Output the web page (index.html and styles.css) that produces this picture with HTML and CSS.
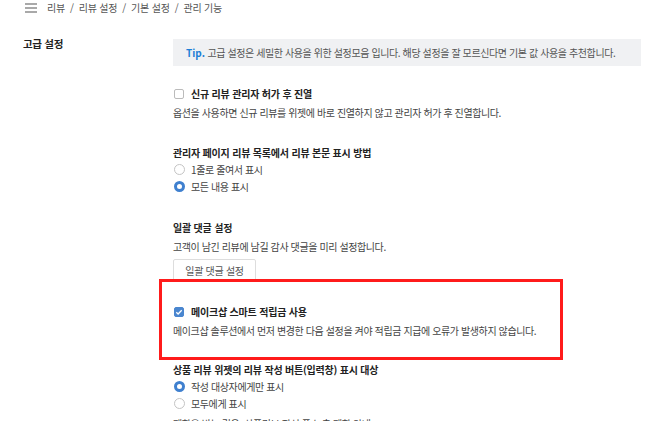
FILE: index.html
```html
<!DOCTYPE html>
<html lang="ko">
<head>
<meta charset="utf-8">
<link rel="stylesheet" href="styles.css">
</head>
<body>
<header class="topbar">
  <svg class="menu" width="12" height="10" viewBox="0 0 12 10"><path d="M0 1h12M0 5h12M0 9h12" stroke="#555" stroke-width="1.2" fill="none"/></svg>
  <nav class="crumbs"><span>리뷰</span><i>/</i><span>리뷰 설정</span><i>/</i><span>기본 설정</span><i>/</i><span>관리 기능</span></nav>
</header>
<main class="layout">
  <h2 class="side-title">고급 설정</h2>
  <div class="content">
    <div class="tip"><b>Tip.</b>&nbsp;고급 설정은 세밀한 사용을 위한 설정모음 입니다. 해당 설정을 잘 모르신다면 기본 값 사용을 추천합니다.</div>

    <section class="sec first">
      <label class="opt title"><span class="box"></span>신규 리뷰 관리자 허가 후 진열</label>
      <p class="desc">옵션을 사용하면 신규 리뷰를 위젯에 바로 진열하지 않고 관리자 허가 후 진열합니다.</p>
    </section>

    <section class="sec">
      <h3 class="title">관리자 페이지 리뷰 목록에서 리뷰 본문 표시 방법</h3>
      <label class="opt"><span class="radio"></span>1줄로 줄여서 표시</label>
      <label class="opt"><span class="radio on"></span>모든 내용 표시</label>
    </section>

    <section class="sec">
      <h3 class="title">일괄 댓글 설정</h3>
      <p class="desc">고객이 남긴 리뷰에 남길 감사 댓글을 미리 설정합니다.</p>
      <button class="btn">일괄 댓글 설정</button>
    </section>

    <section class="highlight">
      <label class="opt title"><span class="box on"><svg width="8" height="8" viewBox="0 0 8 8"><path d="M1.3 4.2l1.8 1.8 3.6-3.8" stroke="#fff" stroke-width="1.3" fill="none"/></svg></span>메이크샵 스마트 적립금 사용</label>
      <p class="desc">메이크샵 솔루션에서 먼저 변경한 다음 설정을 켜야 적립금 지급에 오류가 발생하지 않습니다.</p>
    </section>

    <section class="sec last">
      <h3 class="title">상품 리뷰 위젯의 리뷰 작성 버튼(입력창) 표시 대상</h3>
      <label class="opt"><span class="radio on"></span>작성 대상자에게만 표시</label>
      <label class="opt"><span class="radio"></span>모두에게 표시</label>
      <p class="desc">제한을 받는 경우, 상품리뷰 작성 폼 노출 제한 안내</p>
    </section>
  </div>
</main>
</body>
</html>
```
FILE: styles.css
```css
* { box-sizing: border-box; }
body {
  margin: 0;
  font-family: "Noto Sans CJK KR", "Noto Sans", sans-serif;
  font-size: 10px;
  color: #333;
  background: #fff;
}
.topbar {
  display: flex;
  align-items: center;
  height: 16px;
  padding-left: 25px;
  gap: 10px;
}
.crumbs {
  color: #555;
  font-size: 10px;
  line-height: 16px;
  letter-spacing: -0.2px;
}
.crumbs i { font-style: normal; margin: 0 5px; }
.layout {
  display: grid;
  grid-template-columns: 173px 1fr;
  margin-top: 21px;
}
.side-title {
  margin: 0;
  padding-left: 23px;
  font-size: 10.5px;
  line-height: 14px;
  font-weight: 700;
  color: #222;
  letter-spacing: -0.3px;
}
.content { min-width: 0; letter-spacing: -0.4px; }
.tip {
  margin: 2px 4px 0 0;
  height: 27px;
  display: flex;
  align-items: center;
  padding-left: 13px;
  background: #f0f1f3;
  color: #555;
  white-space: nowrap;
}
.tip b { color: #1d7fd6; font-weight: 700; letter-spacing: 0; }
.sec { margin-top: 26px; }
.sec.first { margin-top: 21px; }
.title {
  margin: 0;
  font-size: 10px;
  line-height: 14px;
  font-weight: 700;
  color: #222;
  letter-spacing: -0.2px;
}
.opt {
  display: flex;
  align-items: center;
  height: 17px;
  color: #444;
}
.opt.title { height: 14px; color: #222; }
.sec .title + .opt { margin-top: 1px; }
.desc {
  margin: 5px 0 0;
  line-height: 14px;
  color: #444;
  white-space: nowrap;
}
.box {
  width: 10px; height: 10px;
  border: 1px solid #bbb;
  border-radius: 2px;
  margin: 0 7px 0 1px;
  display: inline-flex;
  align-items: center;
  justify-content: center;
  background: #fff;
  flex: none;
}
.box.on { background: #4a86cf; border-color: #4a86cf; }
.radio {
  width: 11px; height: 11px;
  border: 1px solid #c4c4c4;
  border-radius: 50%;
  margin: 0 6px 0 1px;
  background: #fff;
  flex: none;
}
.radio.on { border: 3px solid #3f80cf; }
.btn {
  display: block;
  margin-top: 5px;
  width: 83px;
  height: 23px;
  border: 1px solid #ddd;
  border-radius: 2px;
  background: #fff;
  font-family: inherit;
  font-size: 10px;
  letter-spacing: -0.3px;
  color: #555;
  padding: 0;
}
.highlight {
  position: relative;
  margin: -3px 0 0 -14px;
  width: 404px;
  border: 3px solid #ff1b1b;
  padding: 23px 11px 19px;
}
.sec.last { margin-top: 3px; }
```
